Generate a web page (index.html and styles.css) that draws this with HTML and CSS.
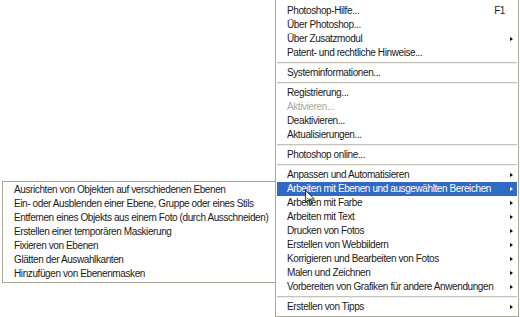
FILE: index.html
```html
<!DOCTYPE html>
<html lang="de">
<head>
  <meta charset="UTF-8" />
  <title>Hilfe-Menü</title>
  <link rel="stylesheet" href="styles.css">
</head>
<body>
  <div class="screen">
    <ul class="menu submenu">
      <li>Ausrichten von Objekten auf verschiedenen Ebenen</li>
      <li>Ein- oder Ausblenden einer Ebene, Gruppe oder eines Stils</li>
      <li>Entfernen eines Objekts aus einem Foto (durch Ausschneiden)</li>
      <li>Erstellen einer temporären Maskierung</li>
      <li>Fixieren von Ebenen</li>
      <li>Glätten der Auswahlkanten</li>
      <li>Hinzufügen von Ebenenmasken</li>
    </ul>

    <ul class="menu main">
      <li>Photoshop-Hilfe...<span class="key">F1</span></li>
      <li>Über Photoshop...</li>
      <li class="sub">Über Zusatzmodul</li>
      <li>Patent- und rechtliche Hinweise...</li>
      <li class="sep"></li>
      <li>Systeminformationen...</li>
      <li class="sep"></li>
      <li>Registrierung...</li>
      <li class="disabled">Aktivieren...</li>
      <li>Deaktivieren...</li>
      <li>Aktualisierungen...</li>
      <li class="sep"></li>
      <li>Photoshop online...</li>
      <li class="sep"></li>
      <li class="sub">Anpassen und Automatisieren</li>
      <li class="sub active">Arbeiten mit Ebenen und ausgewählten Bereichen
        <!-- Mauszeiger -->
        <svg class="cursor" width="10" height="15" viewBox="0 0 12 19">
          <path d="M0.5 0.5 L0.5 16 L4.2 12.4 L6.8 18.3 L9 17.3 L6.5 11.5 L11.5 11.5 Z" fill="#fff" stroke="#000" stroke-width="1" stroke-linejoin="round"/>
        </svg>
      </li>
      <li class="sub">Arbeiten mit Farbe</li>
      <li class="sub">Arbeiten mit Text</li>
      <li class="sub">Drucken von Fotos</li>
      <li class="sub">Erstellen von Webbildern</li>
      <li class="sub">Korrigieren und Bearbeiten von Fotos</li>
      <li class="sub">Malen und Zeichnen</li>
      <li class="sub">Vorbereiten von Grafiken für andere Anwendungen</li>
      <li class="sep"></li>
      <li class="sub">Erstellen von Tipps</li>
    </ul>
  </div>
</body>
</html>
```

FILE: styles.css
```css
body {
  margin: 0;
  background-color: #fff;
  font-family: "Liberation Sans", Arial, sans-serif;
  font-size: 10px;
  letter-spacing: -0.4px;
  color: #1a1a1a;
}
.screen {
  display: flex;
  align-items: flex-start;
  padding-left: 2px;
  height: 317px;
  overflow: hidden;
}
.menu {
  list-style: none;
  margin: 0;
  background-color: #fff;
  border: 1px solid #aca899;
  box-sizing: border-box;
}
.menu li {
  position: relative;
  height: 14px;
  line-height: 14px;
  white-space: nowrap;
}
.submenu {
  width: 274px;
  margin-top: 181px;
  padding: 1px 0;
  position: relative;
  z-index: 2;
}
.submenu li {
  padding-left: 11px;
}
.main {
  width: 244px;
  margin-left: -1px;
  border-top: none;
  padding: 4px 0 2px;
}
.main li {
  margin: 0 1px;
  padding-left: 10px;
}
.main li.sub::after {
  content: "";
  position: absolute;
  right: 4px;
  top: 5px;
  border-left: 3px solid #000;
  border-top: 2px solid transparent;
  border-bottom: 2px solid transparent;
}
.key {
  position: absolute;
  right: 12px;
}
.main li.disabled {
  color: #aca899;
}
.main li.active {
  background-color: #316ac5;
  color: #fff;
}
.main li.active::after {
  border-left-color: #fff;
}
.main li.sep {
  height: 6px;
  padding: 0;
}
.main li.sep::before {
  content: "";
  position: absolute;
  left: 0;
  right: 0;
  top: 2px;
  border-top: 1px solid #c5c2b8;
  border-bottom: 1px solid #f1efe8;
}
.cursor {
  position: absolute;
  left: 28px;
  top: 8px;
}
```
